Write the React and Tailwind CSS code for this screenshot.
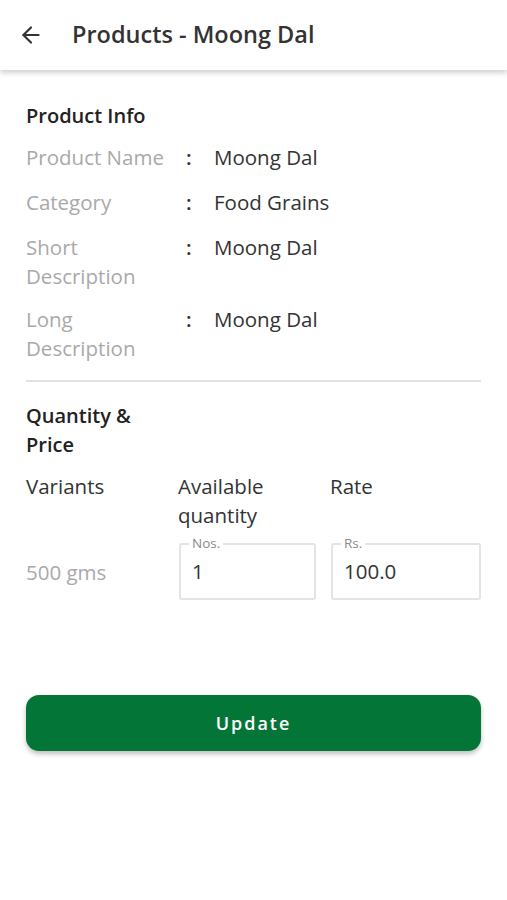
import React from 'react';
import { ArrowLeft } from 'lucide-react';

const font = { fontFamily: '"Open Sans", "Noto Sans", sans-serif' };

const InfoRow = ({ label, value, className = '' }) => (
  <div className={`flex items-start text-[20.5px] leading-[29px] ${className}`}>
    <div className="w-[145px] shrink-0 text-[#a9a9a9]">{label}</div>
    <div className="w-[43px] shrink-0 pl-[15px] text-[#333] font-semibold">:</div>
    <div className="flex-1 text-[#333]">{value}</div>
  </div>
);

const OutlinedField = ({ label, value, className }) => (
  <div className={`relative h-[57px] border-2 border-[#e3e3e8] rounded-[3px] flex items-center px-[11px] ${className}`}>
    <span className="absolute -top-[11px] left-[8px] bg-white px-[3px] text-[13.5px] leading-[18px] text-[#8a8a8a]">
      {label}
    </span>
    <span className="text-[20.5px] text-[#333]">{value}</span>
  </div>
);

export default function App() {
  return (
    <div className="w-[507px] h-[900px] bg-white flex flex-col" style={font}>
      <header className="h-[70px] shrink-0 flex items-center px-[18px] bg-white shadow-[0_3px_5px_rgba(0,0,0,0.18)] z-10">
        <ArrowLeft className="w-[26px] h-[26px] text-[#333]" strokeWidth={2} />
        <h1 className="ml-[28px] text-[23.5px] font-semibold text-[#333]">Products - Moong Dal</h1>
      </header>

      <main className="flex-1 px-[26px] pt-[32px]">
        <h2 className="text-[20px] font-semibold text-[#222] leading-[28px] mb-[13px]">Product Info</h2>
        <div className="flex flex-col gap-[16px]">
          <InfoRow label="Product Name" value="Moong Dal" />
          <InfoRow label="Category" value="Food Grains" />
          <InfoRow label="Short Description" value="Moong Dal" />
          <InfoRow label="Long Description" value="Moong Dal" className="-mt-[2px]" />
        </div>

        <div className="h-[2px] bg-[#e2e2e2] mt-[17px]" />

        <h2 className="mt-[19px] w-[130px] text-[20px] font-semibold text-[#222] leading-[29px]">Quantity &amp; Price</h2>

        <div className="grid grid-cols-[152px_152px_1fr] mt-[13px] text-[20.5px] leading-[29px] text-[#333]">
          <div>Variants</div>
          <div>Available quantity</div>
          <div>Rate</div>
        </div>

        <div className="grid grid-cols-[152px_152px_1fr] items-center mt-[13px]">
          <div className="text-[20.5px] text-[#a9a9a9] pt-[1px]">500 gms</div>
          <OutlinedField label="Nos." value="1" className="mr-[14px] ml-[1px]" />
          <OutlinedField label="Rs." value="100.0" className="ml-[1px]" />
        </div>

        <button className="mt-[95px] w-full h-[56px] rounded-[13px] bg-[#037536] text-white text-[18px] font-semibold tracking-[2px] shadow-[0_3px_5px_rgba(0,0,0,0.25)]">
          Update
        </button>
      </main>
    </div>
  );
}
